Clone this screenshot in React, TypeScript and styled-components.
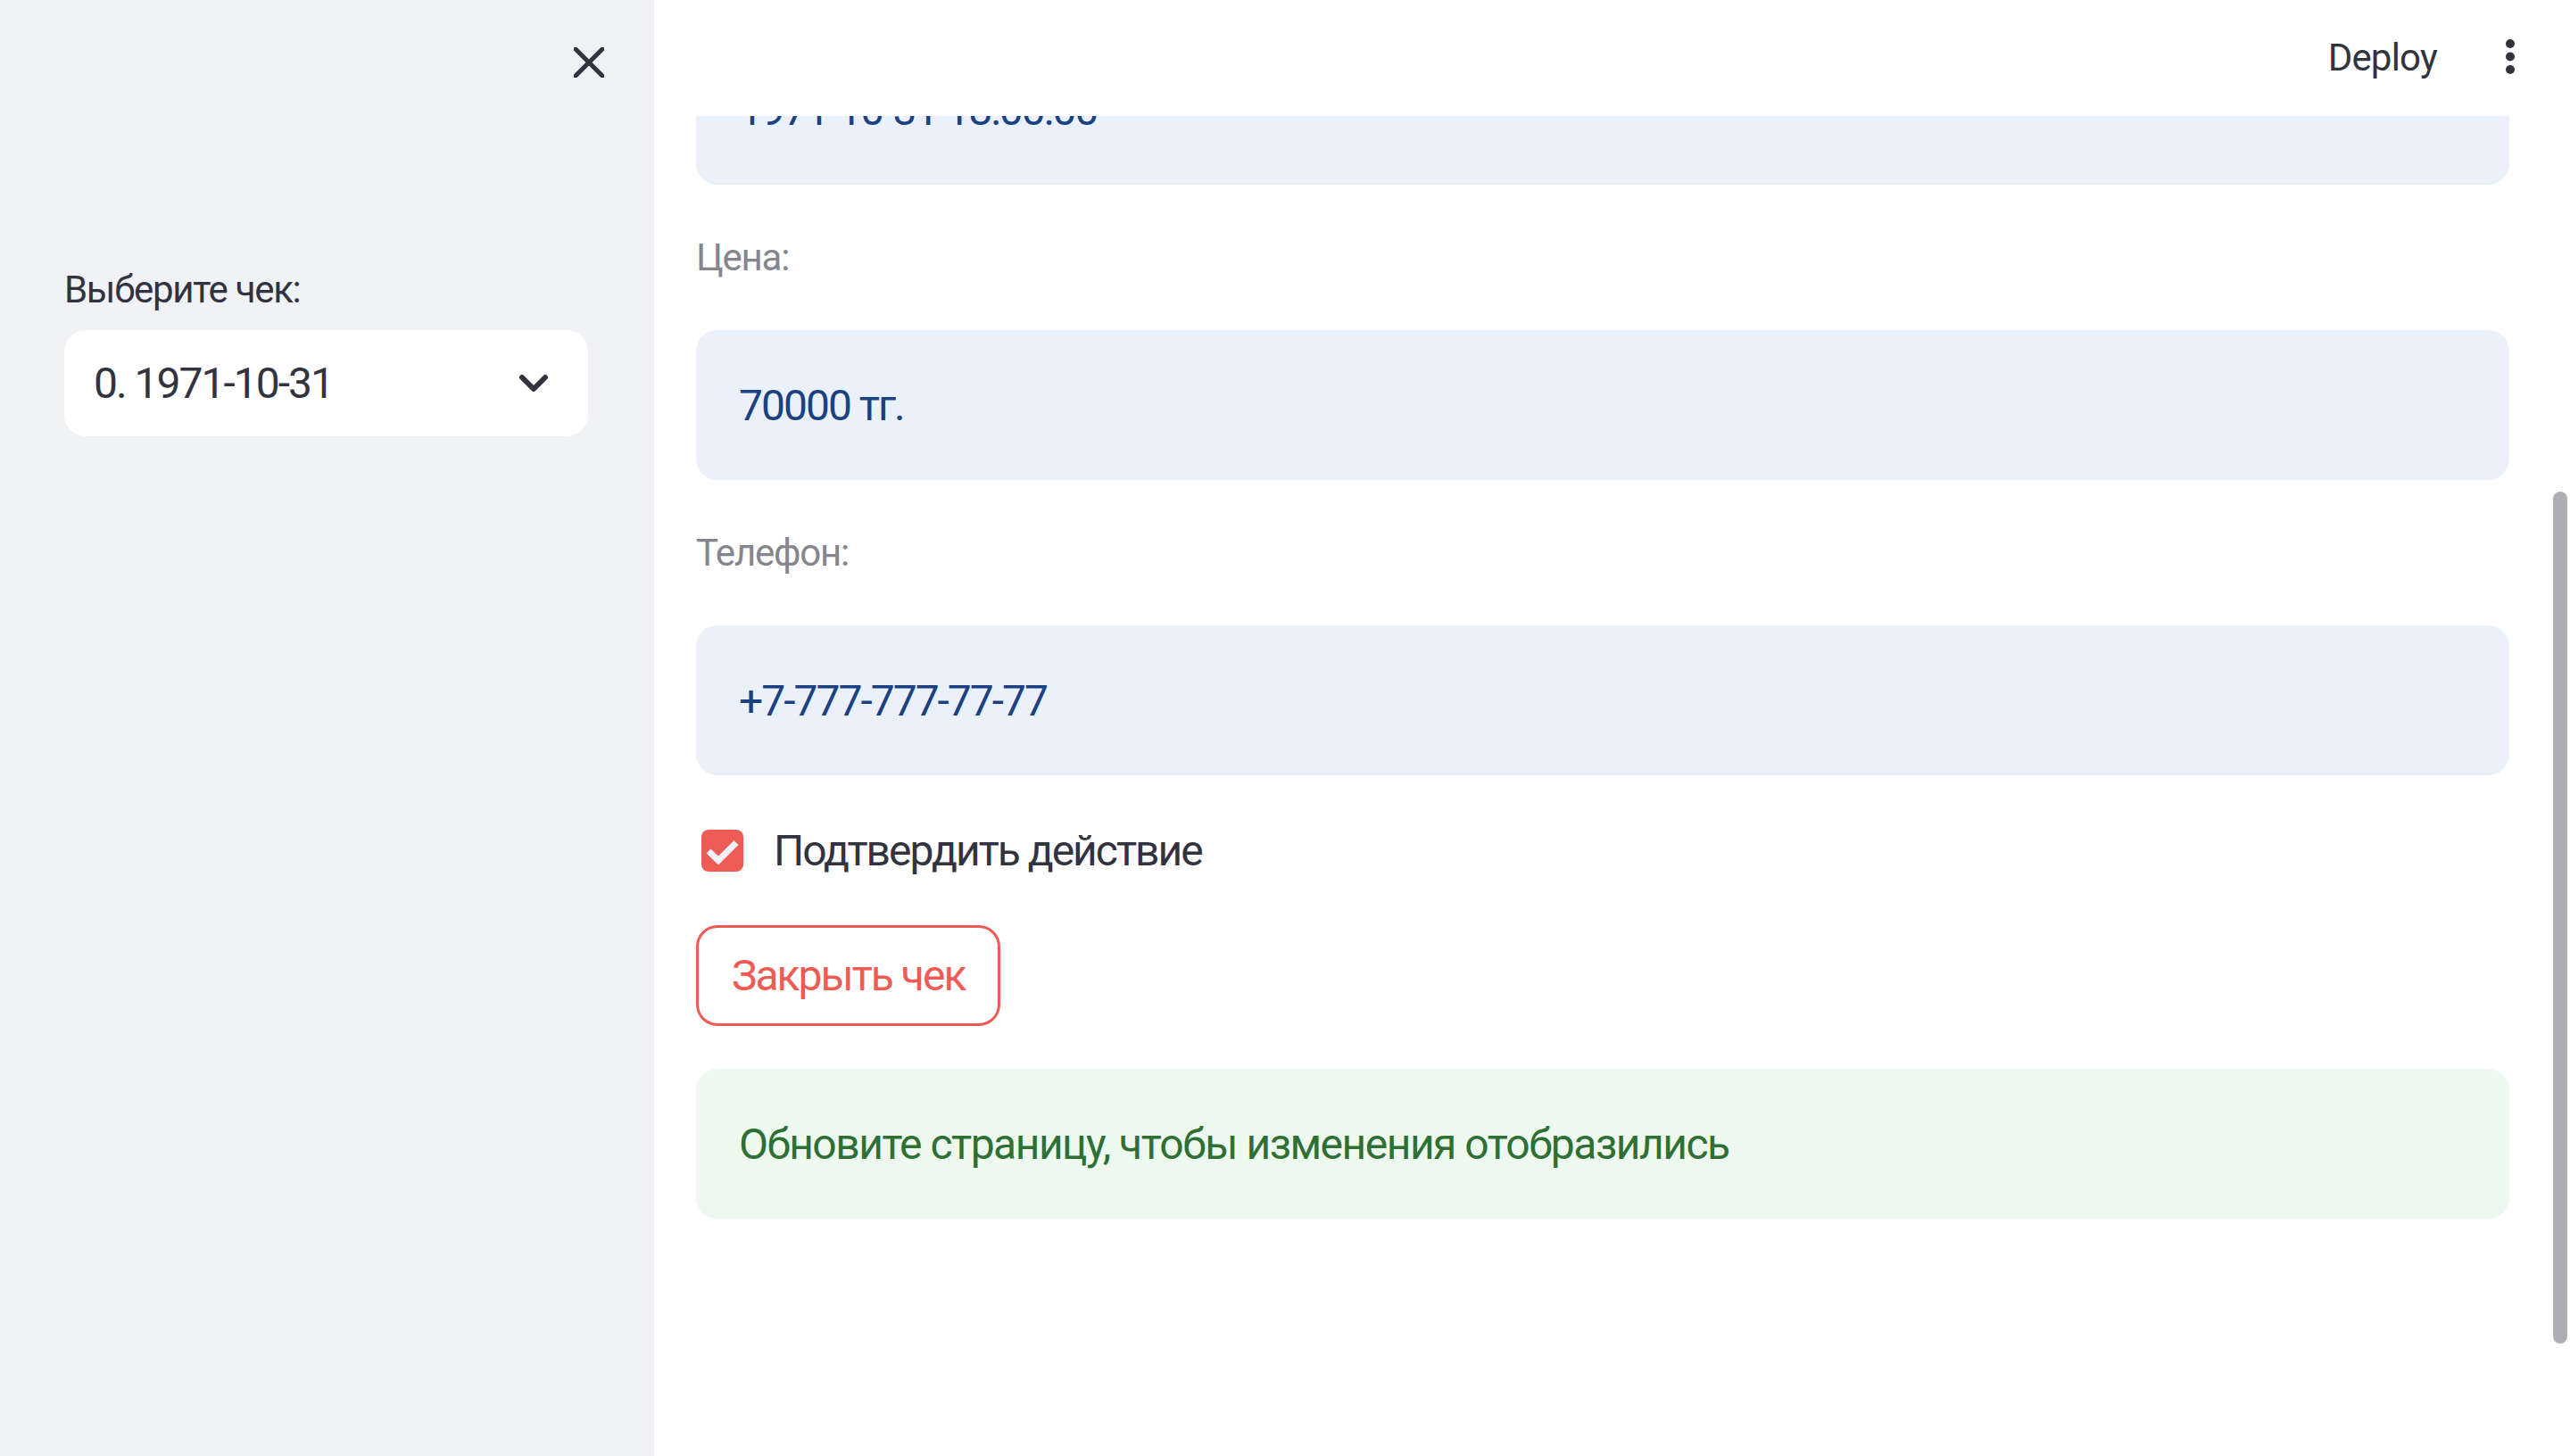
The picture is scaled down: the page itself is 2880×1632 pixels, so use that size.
import React from "react";
import styled, { createGlobalStyle } from "styled-components";

const GlobalStyle = createGlobalStyle`
  html, body {
    margin: 0;
    padding: 0;
    width: 2880px;
    height: 1632px;
    overflow: hidden;
    background: #ffffff;
  }
  * { box-sizing: border-box; }
  body {
    font-family: Roboto, "Noto Sans", sans-serif;
    color: #31333f;
  }
`;

const Page = styled.div`
  display: flex;
  width: 2880px;
  height: 1632px;
`;

const Sidebar = styled.aside`
  width: 733px;
  flex-shrink: 0;
  height: 100%;
  background: #f0f2f6;
  padding: 0 74px 0 72px;
  display: flex;
  flex-direction: column;
`;

const SidebarHeader = styled.div`
  height: 291px;
  display: flex;
  justify-content: flex-end;
  align-items: flex-start;
  padding-top: 53px;
  margin-right: -18px;
`;

const IconButton = styled.button`
  border: none;
  background: transparent;
  padding: 0;
  margin: 0;
  display: flex;
  align-items: center;
  justify-content: center;
  cursor: pointer;
  color: #31333f;
`;

const Field = styled.div`
  display: flex;
  flex-direction: column;
  gap: 12px;
`;

const SidebarLabel = styled.label`
  font-size: 42px;
  line-height: 67px;
  letter-spacing: -1.3px;
  color: #31333f;
`;

const Select = styled.div`
  height: 119px;
  background: #ffffff;
  border-radius: 24px;
  display: flex;
  align-items: center;
  justify-content: space-between;
  padding: 0 44px 0 33px;
  font-size: 48px;
  letter-spacing: -2px;
  color: #31333f;
`;

const Main = styled.main`
  position: relative;
  flex: 1;
  height: 100%;
  overflow: hidden;
  background: #ffffff;
`;

const Header = styled.header`
  position: absolute;
  top: 0;
  left: 0;
  right: 0;
  height: 130px;
  background: #ffffff;
  display: flex;
  align-items: center;
  justify-content: flex-end;
  gap: 76px;
  padding: 0 61px 2px 0;
  z-index: 2;
`;

const DeployButton = styled.button`
  border: none;
  background: transparent;
  padding: 0;
  font-family: Roboto, "Noto Sans", sans-serif;
  font-size: 42px;
  line-height: 67px;
  letter-spacing: -0.8px;
  color: #31333f;
  cursor: pointer;
`;

const Content = styled.div`
  display: flex;
  flex-direction: column;
  align-items: flex-start;
  gap: 48px;
  padding: 39px 68px 0 47px;
`;

const Alert = styled.div<{ $tone: "info" | "success" }>`
  width: 100%;
  height: 168px;
  border-radius: 24px;
  padding: 0 48px;
  display: flex;
  align-items: center;
  font-size: 48px;
  line-height: 77px;
  letter-spacing: ${(p) => (p.$tone === "info" ? "-2px" : "-1.5px")};
  background: ${(p) => (p.$tone === "info" ? "#eaf1fb" : "#edf8ef")};
  color: ${(p) => (p.$tone === "info" ? "#1a4282" : "#2e6f33")};
`;

const FieldCaption = styled.div`
  font-size: 42px;
  line-height: 67px;
  letter-spacing: -1.2px;
  color: #84858d;
`;

const CheckRow = styled.label`
  display: flex;
  align-items: center;
  height: 72px;
  gap: 34px;
  padding-left: 6px;
  font-size: 48px;
  letter-spacing: -2px;
  color: #31333f;
  cursor: pointer;
`;

const CheckBox = styled.span<{ $checked: boolean }>`
  width: 47px;
  height: 47px;
  border-radius: 8px;
  background: ${(p) => (p.$checked ? "#ee5b55" : "#ffffff")};
  display: flex;
  align-items: center;
  justify-content: center;
`;

const OutlineButton = styled.button`
  height: 113px;
  padding: 0 37px;
  border: 3px solid #ee5b55;
  border-radius: 24px;
  background: #ffffff;
  color: #ee5b55;
  font-family: Roboto, "Noto Sans", sans-serif;
  font-size: 48px;
  letter-spacing: -2px;
  cursor: pointer;
`;

const ScrollThumb = styled.div`
  position: absolute;
  right: 3px;
  top: 551px;
  width: 16px;
  height: 955px;
  border-radius: 8px;
  background: #aeadb3;
  z-index: 3;
`;

const CloseIcon = () => (
  <svg width="34" height="34" viewBox="0 0 34 34">
    <path d="M2 2 L32 32 M32 2 L2 32" stroke="#31333f" strokeWidth="5" strokeLinecap="round" fill="none" />
  </svg>
);

const ChevronIcon = () => (
  <svg width="34" height="22" viewBox="0 0 34 22">
    <path d="M4 4 L17 17 L30 4" stroke="#31333f" strokeWidth="6" strokeLinecap="round" strokeLinejoin="round" fill="none" />
  </svg>
);

const DotsIcon = () => (
  <svg width="12" height="42" viewBox="0 0 12 42">
    <circle cx="6" cy="6" r="5" fill="#31333f" />
    <circle cx="6" cy="20.5" r="5" fill="#31333f" />
    <circle cx="6" cy="35" r="5" fill="#31333f" />
  </svg>
);

const CheckIcon = () => (
  <svg width="47" height="47" viewBox="0 0 47 47">
    <path d="M8 24 L19 34.5 L39 14.5" stroke="#f0f2f6" strokeWidth="7" fill="none" />
  </svg>
);

export default function App() {
  return (
    <>
      <GlobalStyle />
      <Page>
        <Sidebar>
          <SidebarHeader>
            <IconButton aria-label="Close sidebar">
              <CloseIcon />
            </IconButton>
          </SidebarHeader>
          <Field>
            <SidebarLabel>Выберите чек:</SidebarLabel>
            <Select>
              <span>0. 1971-10-31</span>
              <ChevronIcon />
            </Select>
          </Field>
        </Sidebar>
        <Main>
          <Header>
            <DeployButton>Deploy</DeployButton>
            <IconButton aria-label="Main menu">
              <DotsIcon />
            </IconButton>
          </Header>
          <Content>
            <Alert $tone="info">1971-10-31 18:00:00</Alert>
            <FieldCaption>Цена:</FieldCaption>
            <Alert $tone="info">70000 тг.</Alert>
            <FieldCaption>Телефон:</FieldCaption>
            <Alert $tone="info">+7-777-777-77-77</Alert>
            <CheckRow>
              <CheckBox $checked>
                <CheckIcon />
              </CheckBox>
              Подтвердить действие
            </CheckRow>
            <OutlineButton>Закрыть чек</OutlineButton>
            <Alert $tone="success">Обновите страницу, чтобы изменения отобразились</Alert>
          </Content>
          <ScrollThumb />
        </Main>
      </Page>
    </>
  );
}
